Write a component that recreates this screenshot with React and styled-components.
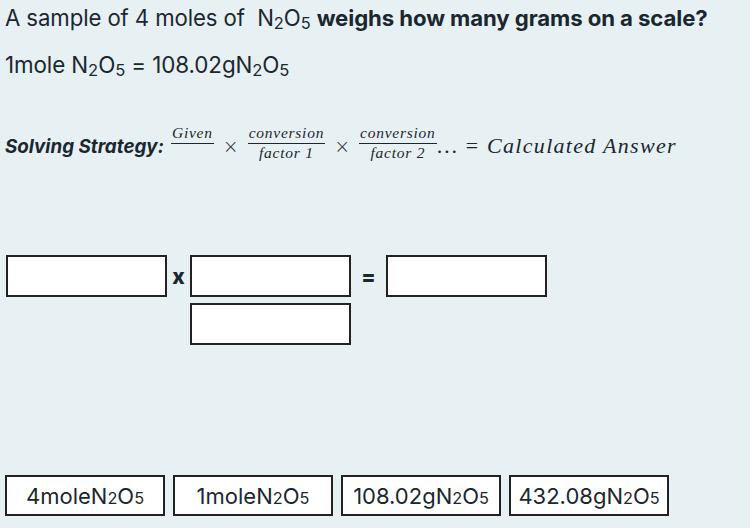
import React from 'react';
import styled, { createGlobalStyle } from 'styled-components';

const GlobalStyle = createGlobalStyle`
  html, body {
    margin: 0;
    padding: 0;
    background: #e7f1f4;
  }
  body {
    font-family: Inter, "Liberation Sans", Arial, sans-serif;
    color: #1b2730;
  }
`;

const Formula = ({ pre = '', post = '' }) => (
  <>
    {pre}N<Sub>2</Sub>O<Sub>5</Sub>{post}
  </>
);

const App = () => {
  const tiles = [
    <Formula pre="4mole" />,
    <Formula pre="1mole" />,
    <Formula pre="108.02g" />,
    <Formula pre="432.08g" />,
  ];

  return (
    <Page>
      <GlobalStyle />
      <Question>
        A sample of 4 moles of&nbsp; <Formula /> <strong>weighs how many grams on a scale?</strong>
      </Question>
      <Given>
        1mole <Formula /> = 108.02g<Formula />
      </Given>

      <Strategy>
        <StrategyLabel>Solving Strategy:</StrategyLabel>
        <Fraction>
          <Num>Given</Num>
          <Den>&nbsp;</Den>
        </Fraction>
        <Op>×</Op>
        <Fraction>
          <Num>conversion</Num>
          <Den>factor 1</Den>
        </Fraction>
        <Op>×</Op>
        <Fraction>
          <Num>conversion</Num>
          <Den>factor 2</Den>
        </Fraction>
        <MathText>…&thinsp;= Calculated Answer</MathText>
      </Strategy>

      <Workspace>
        <DropBox />
        <Symbol>x</Symbol>
        <DropBox />
        <Symbol>=</Symbol>
        <DropBox />
        <Spacer />
        <Spacer />
        <DropBox />
      </Workspace>

      <TileRow>
        {tiles.map((t, i) => (
          <Tile key={i}>{t}</Tile>
        ))}
      </TileRow>
    </Page>
  );
};

const Page = styled.div`
  width: 750px;
  height: 528px;
  box-sizing: border-box;
  padding: 5px 5px 0;
  display: flex;
  flex-direction: column;
`;

const Sub = styled.span`
  font-size: 0.74em;
  position: relative;
  top: 0.16em;
`;

const Question = styled.div`
  font-size: 22.2px;
  line-height: 26px;
  letter-spacing: -0.1px;

  strong {
    font-weight: 700;
  }
`;

const Given = styled.div`
  font-size: 22.4px;
  line-height: 26px;
  letter-spacing: -0.1px;
  margin-top: 19px;
`;

const Strategy = styled.div`
  display: flex;
  align-items: center;
  margin-top: 46px;
  height: 40px;
`;

const StrategyLabel = styled.span`
  font-weight: 700;
  font-style: italic;
  font-size: 18.8px;
  margin-right: 6px;
`;

const Fraction = styled.span`
  display: inline-flex;
  flex-direction: column;
  align-items: center;
  font-family: "Liberation Serif", "Times New Roman", serif;
  font-style: italic;
  font-size: 15.5px;
  letter-spacing: 0.75px;
  line-height: 16px;
  padding: 0 1px;
  margin-top: -6px;
`;

const Num = styled.span`
  padding: 0 1px 2px;
  border-bottom: 1px solid #1b2730;
  align-self: stretch;
  text-align: center;
`;

const Den = styled.span`
  padding-top: 1px;
`;

const Op = styled.span`
  font-family: "DejaVu Sans", sans-serif;
  font-weight: 200;
  font-size: 19px;
  margin: 0 8px;
  color: #2a3338;
`;

const MathText = styled.span`
  font-family: "Liberation Serif", "Times New Roman", serif;
  font-style: italic;
  font-size: 22px;
  letter-spacing: 1.3px;
`;

const Workspace = styled.div`
  display: grid;
  grid-template-columns: 161px 23px 161px 35px 161px;
  grid-auto-rows: 42px;
  row-gap: 6px;
  margin-top: 89px;
  margin-left: 1px;
`;

const DropBox = styled.div`
  box-sizing: border-box;
  border: 2px solid #222;
  background: #ffffff;
`;

const Symbol = styled.div`
  display: flex;
  align-items: center;
  justify-content: center;
  font-weight: 800;
  font-size: 21px;
  color: #1a282e;
`;

const Spacer = styled.div``;

const TileRow = styled.div`
  display: flex;
  gap: 8px;
  margin-top: 130px;
`;

const Tile = styled.div`
  box-sizing: border-box;
  width: 160px;
  height: 41px;
  border: 2px solid #222;
  background: #ffffff;
  display: flex;
  align-items: center;
  justify-content: center;
  font-size: 22px;
`;

export default App;
